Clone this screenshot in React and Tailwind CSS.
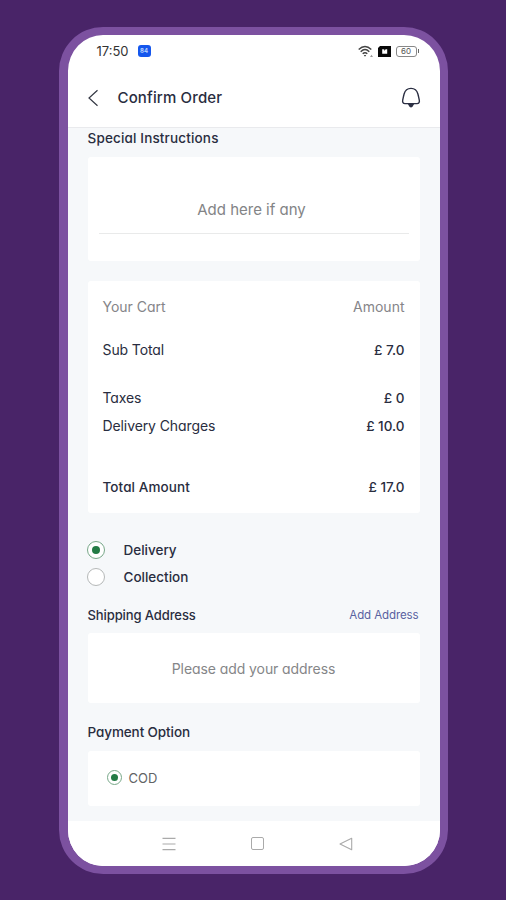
import React, { useState } from 'react';

const cartRows = [
  { label: 'Sub Total', value: '£ 7.0', spacing: 'mt-[19px]' },
  { label: 'Taxes', value: '£ 0', spacing: 'mt-6' },
  { label: 'Delivery Charges', value: '£ 10.0', spacing: 'mt-1' },
];

const Radio = ({ checked, small }) => (
  <span
    className={`flex shrink-0 items-center justify-center rounded-full border bg-white ${
      small ? 'size-[15px]' : 'size-[18px]'
    } ${checked ? 'border-[#78a889]' : 'border-[#b5b8b8]'}`}
  >
    {checked && <span className={`rounded-full bg-[#237b45] ${small ? 'size-[7px]' : 'size-[8px]'}`} />}
  </span>
);

const StatusBar = () => (
  <div className="flex h-8 shrink-0 items-center pl-[29px] pr-[21px] text-[#333]">
    <span className="w-[33px] text-[13px] leading-6">17:50</span>
    <span className="ml-2 flex h-3 w-[13px] items-center justify-center rounded-[3px] bg-[#1557ed] text-[6px] font-bold text-[#b9d2ff]">
      84
    </span>
    <div className="ml-auto flex items-center">
      <svg width="16" height="13" viewBox="0 0 16 13" fill="none" stroke="#444" strokeWidth="1.5">
        <path d="M.7 4.5Q7-1.5 13.3 4.5" />
        <path d="M2.7 6.7Q7 2.4 11.3 6.7" />
        <path d="M4.7 8.8Q7 6.6 9.3 8.8" />
        <path d="M5.8 10h2.4L7 11.8z" fill="#333" stroke="none" />
        <path d="M12 12l1.5-2.2L15 12z" fill="#999" stroke="none" />
      </svg>
      <svg width="13" height="11" viewBox="0 0 13 11" className="ml-1">
        <path d="M2 0h11v11H0V2z" fill="#080808" />
        <path d="M4.2 3.2h5v4.6h-5z" fill="#fff" />
        <path d="M5.7 3.2l1 1.6 1-1.6z" fill="#080808" />
      </svg>
      <span className="ml-[5px] flex h-[11px] w-[21px] items-center justify-center rounded-[3px] border border-[#888] text-[8px] leading-none text-[#555]">
        60
      </span>
      <span className="ml-px h-1 w-px bg-[#666]" />
    </div>
  </div>
);

const Header = () => (
  <header className="flex h-[61px] shrink-0 items-center border-b border-[#e9eaed] pl-5 pr-[19px] pt-px">
    <svg width="11" height="18" viewBox="0 0 11 18" fill="none" stroke="#333743" strokeWidth="1.2">
      <path d="M9.5 1.2L1 9l8.5 7.8" />
    </svg>
    <h1 className="ml-[19px] text-[15px] font-medium leading-6 tracking-[0.15px]">Confirm Order</h1>
    <svg width="20" height="22" viewBox="0 0 20 22" fill="none" stroke="#2b2f43" strokeWidth="1.4" className="ml-auto">
      <path d="M4 16.6C2 16.6 1.3 15 1.7 13.2C2.2 11.1 2.4 9.4 3.1 7C4.1 3.3 6.7 1.4 10 1.4S15.9 3.3 16.9 7C17.6 9.4 17.8 11.1 18.3 13.2C18.7 15 18 16.6 16 16.6Z" />
      <path d="M6.8 17Q10 23.8 13.2 17z" fill="#2b2f43" stroke="none" />
    </svg>
  </header>
);

const NavBar = () => (
  <nav className="flex h-[45px] shrink-0 items-center justify-between bg-white pl-[94px] pr-[87px]">
    <svg width="14" height="14" viewBox="0 0 14 14" stroke="#aaa" strokeWidth="1.2">
      <path d="M.5 1.4h13M.5 7h13M.5 12.6h13" />
    </svg>
    <span className="size-[13px] rounded-[2px] border border-[#aaa]" />
    <svg width="14" height="14" viewBox="0 0 14 14" fill="none" stroke="#aaa" strokeWidth="1.1" strokeLinejoin="round">
      <path d="M12.7 1.3v11.4L1 7z" />
    </svg>
  </nav>
);

export default function App() {
  const [method, setMethod] = useState('Delivery');

  return (
    <div className="flex h-[900px] w-[506px] justify-center bg-[#492468] pt-[27px] font-['Inter',sans-serif] text-[14px] leading-6 text-[#292d40] [font-feature-settings:'cv11']">
      <div className="flex h-[847px] w-[389px] flex-col overflow-hidden rounded-[44px] border-8 border-l-9 border-[#7c51a0] bg-white">
        <StatusBar />
        <Header />

        <main className="flex min-h-0 flex-1 flex-col bg-[#f6f8fa] px-5">
          <h2 className="-mt-[2px] text-[13.5px] font-medium tracking-[0.16px]">Special Instructions</h2>
          <section className="mt-[7px] flex h-[104px] shrink-0 flex-col rounded-[3px] bg-white px-[11px] pt-[41px]">
            <div className="flex h-[36px] justify-center border-b border-[#e9eaea] pr-1 text-[15px] text-[#838486]">
              Add here if any
            </div>
          </section>

          <section className="mt-5 h-[232px] shrink-0 rounded-[3px] bg-white px-[15px] pt-[14px]">
            <div className="flex justify-between text-[#858589]">
              <span>Your Cart</span>
              <span>Amount</span>
            </div>
            {cartRows.map((row) => (
              <div key={row.label} className={`flex justify-between ${row.spacing}`}>
                <span className="tracking-[-0.1px]">{row.label}</span>
                <span className="text-[13.5px] font-medium">{row.value}</span>
              </div>
            ))}
            <div className="mt-[37px] flex justify-between font-medium">
              <span className="text-[13.5px] tracking-[0.1px]">Total Amount</span>
              <span className="text-[13.5px]">£ 17.0</span>
            </div>
          </section>

          <div className="mt-[25px] flex shrink-0 flex-col gap-[3px]">
            {['Delivery', 'Collection'].map((name) => (
              <button key={name} onClick={() => setMethod(name)} className="-ml-px flex h-6 items-center gap-[19px]">
                <Radio checked={method === name} />
                <span className="text-[13.5px] font-medium">{name}</span>
              </button>
            ))}
          </div>

          <div className="mt-[14px] flex shrink-0 justify-between">
            <h2 className="text-[13px] font-medium tracking-[-0.1px]">Shipping Address</h2>
            <a className="pr-px text-[11.5px] tracking-[-0.1px] text-[#5961a0]">Add Address</a>
          </div>
          <section className="mt-[6px] flex h-[70px] shrink-0 items-center justify-center rounded-[3px] bg-white pt-[2px] tracking-[-0.08px] text-[#858688]">
            Please add your address
          </section>

          <h2 className="mt-[17px] text-[13.5px] font-medium tracking-[-0.1px]">Payment Option</h2>
          <section className="mt-[7px] flex h-[55px] shrink-0 items-center gap-[7px] rounded-[3px] bg-white pb-[2px] pl-[19px] text-[13px] text-[#616365]">
            <Radio checked small />
            <span>COD</span>
          </section>
        </main>

        <NavBar />
      </div>
    </div>
  );
}
